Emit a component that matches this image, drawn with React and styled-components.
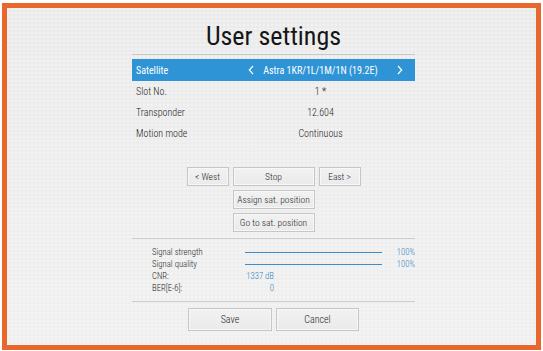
import React from "react";
import styled, { createGlobalStyle } from "styled-components";

const GlobalStyle = createGlobalStyle`
  html, body {
    margin: 0;
    padding: 0;
    background: #ffffff;
  }
  body {
    font-family: "Roboto Condensed", "DejaVu Sans Condensed", "Liberation Sans Narrow", sans-serif;
    font-weight: 300;
  }
`;

const Frame = styled.div`
  box-sizing: border-box;
  margin: 3px 2px 0 2px;
  height: 347px;
  border: 5px solid #e8672c;
  background-color: #ededed;
  background-image:
    radial-gradient(circle at 1px 1px, rgba(255,255,255,0.35) 1px, transparent 1.5px),
    linear-gradient(180deg, #ebebeb, #f0f0f0);
  background-size: 4px 4px, 100% 100%;
  display: flex;
  flex-direction: column;
  align-items: center;
`;

const Panel = styled.div`
  width: 283px;
  margin-left: 4px;
  display: flex;
  flex-direction: column;
`;

const Title = styled.h1`
  margin: 8px 0 0;
  height: 38px;
  line-height: 41px;
  text-align: center;
  font-weight: normal;
  font-size: 26px;
  color: #161616;
  border-bottom: 1px solid #c8c8c8;
`;

const Rows = styled.div`
  margin-top: 4px;
  display: flex;
  flex-direction: column;
`;

const Row = styled.div`
  display: grid;
  grid-template-columns: 108px 1fr 14px;
  align-items: center;
  height: ${({ $active }) => ($active ? "22px" : "21px")};
  padding: 0 4px;
  font-size: 10px;
  font-weight: ${({ $active }) => ($active ? 400 : 300)};
  color: ${({ $active }) => ($active ? "#ffffff" : "#1e1e1e")};
  background: ${({ $active }) => ($active ? "#2f94d6" : "transparent")};
`;

const Value = styled.div`
  display: flex;
  align-items: center;
  justify-content: center;
  position: relative;
`;

const Chevron = styled.svg`
  width: 6px;
  height: 10px;
  display: block;
`;

const LeftChevron = styled(Chevron)`
  position: absolute;
  left: 4px;
`;

const ChevronLeft = () => (
  <LeftChevron viewBox="0 0 6 10">
    <path d="M5 1 L1.3 5 L5 9" fill="none" stroke="#ffffff" strokeWidth="1.2" />
  </LeftChevron>
);

const ChevronRight = () => (
  <Chevron viewBox="0 0 6 10">
    <path d="M1 1 L4.7 5 L1 9" fill="none" stroke="#ffffff" strokeWidth="1.2" />
  </Chevron>
);

const Controls = styled.div`
  margin: 23px auto 0;
  display: grid;
  grid-template-columns: 42px 82px 42px;
  grid-auto-rows: 19px;
  gap: 4px;
`;

const Btn = styled.button`
  box-sizing: border-box;
  grid-column: ${({ $col }) => $col || "auto"};
  margin: 0;
  padding: 0;
  font-family: inherit;
  font-weight: inherit;
  font-size: 9.5px;
  color: #1e1e1e;
  background: linear-gradient(180deg, #f2f2f2, #eaeaea);
  border: 1px solid #c6c6c6;
  box-shadow: inset 0 0 0 1px #f7f7f7;
  white-space: nowrap;
`;

const Divider = styled.div`
  height: 1px;
  background: #cccccc;
  margin-top: ${({ $top }) => $top}px;
`;

const Signal = styled.div`
  padding: 7px 0 7px 20px;
  display: flex;
  flex-direction: column;
`;

const SignalRow = styled.div`
  display: grid;
  grid-template-columns: 93px 137px 1fr;
  align-items: center;
  height: 12px;
  font-size: 8.7px;
  color: #262626;
  white-space: nowrap;
`;

const Bar = styled.div`
  height: 1px;
  background: #3c8dc7;
`;

const Pct = styled.div`
  text-align: right;
  color: #2f86c2;
`;

const Num = styled.div`
  width: 29px;
  text-align: right;
  color: #2f86c2;
`;

const Footer = styled.div`
  margin: 6px auto 0;
  display: grid;
  grid-template-columns: 84px 83px;
  gap: 4px;
  height: 23px;
`;

const FootBtn = styled(Btn)`
  font-size: 10px;
`;

export default function App() {
  return (
    <>
      <GlobalStyle />
      <Frame>
        <Panel>
          <Title>User settings</Title>
          <Rows>
            <Row $active>
              <span>Satellite</span>
              <Value>
                <ChevronLeft />
                Astra 1KR/1L/1M/1N (19.2E)
              </Value>
              <ChevronRight />
            </Row>
            <Row>
              <span>Slot No.</span>
              <Value>1 *</Value>
              <span />
            </Row>
            <Row>
              <span>Transponder</span>
              <Value>12.604</Value>
              <span />
            </Row>
            <Row>
              <span>Motion mode</span>
              <Value>Continuous</Value>
              <span />
            </Row>
          </Rows>

          <Controls>
            <Btn>&lt; West</Btn>
            <Btn>Stop</Btn>
            <Btn>East &gt;</Btn>
            <Btn $col="2">Assign sat. position</Btn>
            <Btn $col="2">Go to sat. position</Btn>
          </Controls>

          <Divider $top={6} />
          <Signal>
            <SignalRow>
              <span>Signal strength</span>
              <Bar />
              <Pct>100%</Pct>
            </SignalRow>
            <SignalRow>
              <span>Signal quality</span>
              <Bar />
              <Pct>100%</Pct>
            </SignalRow>
            <SignalRow>
              <span>CNR:</span>
              <Num>1337 dB</Num>
              <span />
            </SignalRow>
            <SignalRow>
              <span>BER[E-6]:</span>
              <Num>0</Num>
              <span />
            </SignalRow>
          </Signal>
          <Divider $top={0} />

          <Footer>
            <FootBtn>Save</FootBtn>
            <FootBtn>Cancel</FootBtn>
          </Footer>
        </Panel>
      </Frame>
    </>
  );
}
